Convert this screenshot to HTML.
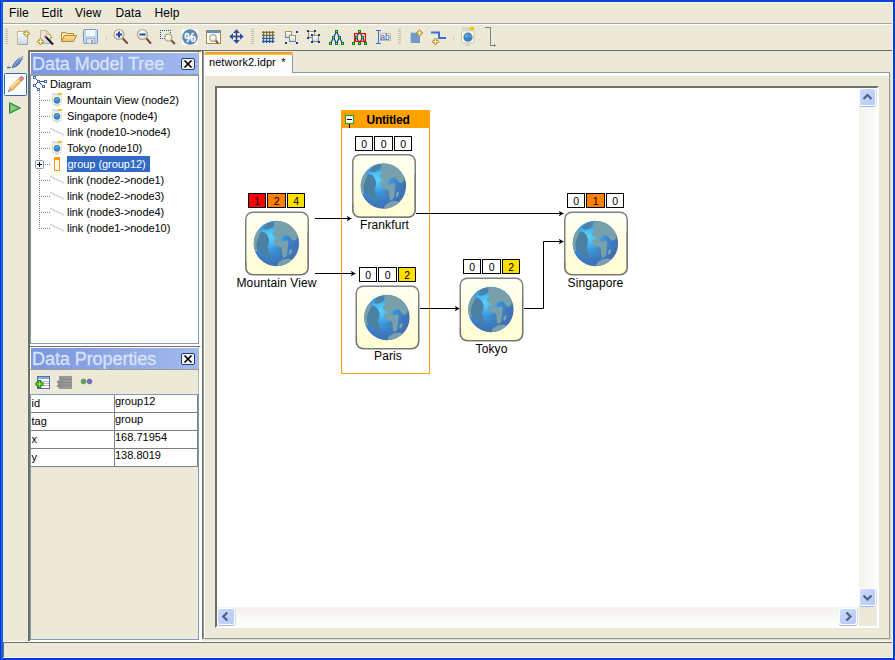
<!DOCTYPE html>
<html><head><meta charset="utf-8"><title>network2.idpr</title>
<style>
html,body{margin:0;padding:0}
body{width:895px;height:660px;overflow:hidden;position:relative;background:#ECE9D8;font-family:"Liberation Sans",sans-serif;font-size:11px;color:#000}
div,span,svg{position:absolute;box-sizing:border-box}
.menu{top:6px;font-size:12px;line-height:14px;white-space:nowrap;letter-spacing:0.1px}
.tt{font-size:11px;line-height:16px;height:16px;white-space:nowrap;letter-spacing:-0.05px}
.sel{background:#316AC5;color:#fff}
.title{height:21px;background:linear-gradient(90deg,#7A96DF,#A3BAEE);color:#D9E2F8;font-size:18px;line-height:21px;letter-spacing:-0.06px;padding-left:1px;padding-top:1px;-webkit-text-stroke:0.3px #D9E2F8;white-space:nowrap;overflow:hidden}
.xbtn{width:14px;height:12px;border:1px solid #1C3F8C;border-radius:2px;background:#F6F5EE}
.pt{font-size:11px;line-height:13px;white-space:nowrap}
.sbtn{background:linear-gradient(135deg,#CDDBFB,#B5C9F5);border:1px solid #fff;border-radius:3px;box-shadow:0 1px 0 #9DB5EC,1px 0 0 #D4DEF8}
</style></head><body>
<!-- window frame -->
<div style="left:0;top:0;width:895px;height:2px;background:#0046DC"></div>
<div style="left:0;top:658px;width:895px;height:2px;background:#003CDC"></div>
<div style="left:0;top:0;width:3px;height:660px;background:linear-gradient(90deg,#0831D9 0,#0831D9 33%,#1668EE 34%,#0A5CE6)"></div>
<div style="left:893px;top:0;width:2px;height:660px;background:#003CDC"></div>
<div style="left:892px;top:2px;width:1px;height:656px;background:#FDF3DA"></div>
<div style="left:3px;top:2px;width:889px;height:1px;background:#FDF3DA"></div>

<!-- menu -->
<span class="menu" style="left:9px">File</span>
<span class="menu" style="left:41.5px">Edit</span>
<span class="menu" style="left:75px">View</span>
<span class="menu" style="left:115.5px">Data</span>
<span class="menu" style="left:154.5px">Help</span>
<div style="left:3px;top:23px;width:889px;height:1px;background:#ACA899"></div>
<div style="left:3px;top:24px;width:889px;height:1px;background:#fff"></div>

<!-- toolbar -->
<svg class="abs" style="left:0;top:0" width="520" height="50" viewBox="0 0 520 50"><defs><linearGradient id="pg" x1="0" y1="0" x2="0" y2="1"><stop offset="0" stop-color="#FFFFFF"/><stop offset="1" stop-color="#C8D8F0"/></linearGradient><linearGradient id="fo" x1="0" y1="0" x2="0" y2="1"><stop offset="0" stop-color="#FFE2A0"/><stop offset="1" stop-color="#F0B860"/></linearGradient><linearGradient id="gr" gradientUnits="userSpaceOnUse" x1="0" y1="31" x2="0" y2="43"><stop offset="0" stop-color="#946E1C"/><stop offset="0.45" stop-color="#5C6C60"/><stop offset="1" stop-color="#0C50C0"/></linearGradient><linearGradient id="sq" x1="0" y1="0" x2="0" y2="1"><stop offset="0" stop-color="#B09850"/><stop offset="1" stop-color="#7080A8"/></linearGradient><radialGradient id="ln" cx="0.35" cy="0.35" r="0.8"><stop offset="0" stop-color="#FFFFFF"/><stop offset="1" stop-color="#D0DCE8"/></radialGradient></defs>
<path d="M5 29.5 H8 M5 31.5 H8 M5 33.5 H8 M5 35.5 H8 M5 37.5 H8 M5 39.5 H8 M5 41.5 H8 M5 43.5 H8" stroke="#C2BFAF" stroke-width="1"/>
<path d="M17.5 31.5 H27.5 V44.5 H17.5 Z" fill="url(#pg)" stroke="#A8A498"/><path d="M17.5 44 V31.5 H27" stroke="#C8B484" fill="none"/>
<path d="M26.5 29.9 L30.1 33.5 L26.5 37.1 L22.9 33.5 Z" fill="#C39A22" stroke="#A88418" stroke-width="0.4"/><path d="M26.5 31.3 V35.7 M24.3 33.5 H28.7" stroke="#FFFBE6" stroke-width="1.1" fill="none"/>
<path d="M40.5 30.5 H46.5 L50.5 34.5 V43.500 H40.5 Z" fill="url(#pg)" stroke="#B0AC9C"/><path d="M40.5 43 V30.5 H46.5 L50.5 34.5 H46.5 V30.5" stroke="#C8B484" fill="#E8E4D4"/>
<path d="M45.5 36.5 L53 44.5" stroke="#101030" stroke-width="2"/><path d="M44.8 35.8 L46.2 37.3" stroke="#D05030" stroke-width="2"/>
<g shape-rendering="crispEdges"><rect x="49" y="35" width="1" height="1" fill="#F4E020"/><rect x="52" y="35" width="1" height="1" fill="#F4E020"/><rect x="50" y="36" width="1" height="1" fill="#F0C020"/><rect x="51" y="37" width="1" height="1" fill="#D06030"/><rect x="52" y="37" width="1" height="1" fill="#F4E020"/><rect x="51" y="38" width="1" height="1" fill="#F4E020"/></g>
<path d="M40.5 37.9 L44.1 41.5 L40.5 45.1 L36.9 41.5 Z" fill="#C39A22" stroke="#A88418" stroke-width="0.4"/><path d="M40.5 39.3 V43.7 M38.3 41.5 H42.7" stroke="#FFFBE6" stroke-width="1.1" fill="none"/>
<path d="M61.500 41.500 V32.5 H65.5 L66.5 33.5 H73.5 V35.5" fill="#FFE9B0" stroke="#C08830"/>
<path d="M61.500 41.500 L64.5 35.5 H76.5 L73.5 41.500 Z" fill="url(#fo)" stroke="#C08830"/>
<rect x="83.5" y="29.5" width="14" height="14" rx="1" fill="#C4D6F0" stroke="#7C98C8"/><rect x="86" y="30" width="9" height="6" fill="#F4F8FF"/><rect x="86.500" y="38.5" width="8" height="5" fill="#DCE6F4" stroke="#8CA4CC" stroke-width="0.800"/><rect x="91" y="40" width="2" height="3" fill="#B8A878"/>
<path d="M106.500 36 V40" stroke="#CFCBB8"/>
<path d="M122.5 38 L127 43" stroke="#84483C" stroke-width="2" stroke-linecap="round"/><circle cx="119" cy="34.5" r="5" fill="url(#ln)" stroke="#B8A878" stroke-width="1.200"/>
<path d="M116 34.500 H122 M119 31.500 V37.5" stroke="#1C4CA8" stroke-width="2"/>
<path d="M146 38 L150.5 43" stroke="#84483C" stroke-width="2" stroke-linecap="round"/><circle cx="142.5" cy="34.5" r="5" fill="url(#ln)" stroke="#B8A878" stroke-width="1.200"/>
<path d="M139.500 34.500 H145.500" stroke="#1C4CA8" stroke-width="2"/>
<g shape-rendering="crispEdges" fill="#1C4CA8"><rect x="160" y="30" width="1" height="1"/><rect x="160" y="38" width="1" height="1"/><rect x="162" y="30" width="1" height="1"/><rect x="162" y="38" width="1" height="1"/><rect x="164" y="30" width="1" height="1"/><rect x="164" y="38" width="1" height="1"/><rect x="166" y="30" width="1" height="1"/><rect x="166" y="38" width="1" height="1"/><rect x="168" y="30" width="1" height="1"/><rect x="168" y="38" width="1" height="1"/><rect x="170" y="30" width="1" height="1"/><rect x="170" y="38" width="1" height="1"/><rect x="160" y="32" width="1" height="1"/><rect x="170" y="32" width="1" height="1"/><rect x="160" y="34" width="1" height="1"/><rect x="170" y="34" width="1" height="1"/><rect x="160" y="36" width="1" height="1"/><rect x="170" y="36" width="1" height="1"/></g>
<path d="M170.85 40.05 L174.4 43.4" stroke="#84483C" stroke-width="2" stroke-linecap="round"/><circle cx="168.4" cy="37.6" r="3.5" fill="url(#ln)" stroke="#B8A878" stroke-width="1.200"/>
<rect x="182" y="29" width="16" height="16" fill="#fff"/><circle cx="190" cy="37" r="7.800" fill="#5C88B4"/><text x="190" y="42" font-size="13" font-weight="bold" fill="#fff" stroke="#fff" stroke-width="0.3" text-anchor="middle" font-family="'Liberation Sans',sans-serif">%</text>
<rect x="206.5" y="30.5" width="14" height="13" fill="#fff" stroke="#A08A48"/><rect x="207" y="31" width="13" height="2" fill="#4C94E4"/>
<path d="M215.31 40.31 L217.5 42.5" stroke="#84483C" stroke-width="2" stroke-linecap="round"/><circle cx="213" cy="38" r="3.3" fill="url(#ln)" stroke="#B8A878" stroke-width="1.200"/>
<path d="M236.500 31 V42 M231 36.500 H242" stroke="#2A4E9C" stroke-width="1.500" fill="none"/><path d="M236.500 29.300 L239.800 33 H233.200 Z M236.500 43.700 L239.800 40 H233.200 Z M229.300 36.500 L233 33.200 V39.800 Z M243.700 36.500 L240 33.200 V39.800 Z" fill="#2A4E9C"/><rect x="235.500" y="35.500" width="2" height="2" fill="#5A3C9C"/>
<path d="M251 29.5 H254 M251 31.5 H254 M251 33.5 H254 M251 35.5 H254 M251 37.5 H254 M251 39.5 H254 M251 41.5 H254 M251 43.5 H254" stroke="#C2BFAF" stroke-width="1"/>
<rect x="263" y="32" width="10" height="10" fill="#fff"/><path d="M263.600 31 V43 M266.600 31 V43 M269.600 31 V43 M272.600 31 V43 M262 32.400 H274.500 M262 35.400 H274.500 M262 38.400 H274.500 M262 41.400 H274.500" stroke="url(#gr)" stroke-width="1.400" fill="none"/>
<rect x="285.5" y="31.500" width="6" height="6" fill="url(#pg)" stroke="url(#sq)"/><rect x="289.5" y="35.5" width="6" height="6" fill="url(#pg)" stroke="url(#sq)"/><rect x="296" y="31" width="2" height="2" fill="#1C3C80"/><rect x="285" y="42" width="2" height="2" fill="#1C3C80"/><rect x="296" y="42" width="2" height="2" fill="#1C3C80"/>
<rect x="308.5" y="31.500" width="6" height="6" fill="url(#pg)" stroke="url(#sq)"/><rect x="312.5" y="35.5" width="6" height="6" fill="url(#pg)" stroke="url(#sq)"/><rect x="307" y="30" width="2" height="2" fill="#1C3C80"/><rect x="314" y="30" width="2" height="2" fill="#1C3C80"/><rect x="307" y="37" width="2" height="2" fill="#1C3C80"/><rect x="311" y="34" width="2" height="2" fill="#1C3C80"/><rect x="318" y="34" width="2" height="2" fill="#1C3C80"/><rect x="311" y="41" width="2" height="2" fill="#1C3C80"/><rect x="318" y="41" width="2" height="2" fill="#1C3C80"/>
<path d="M336.5 31.500 L333.5 37.500 L330.5 43.500 M333.5 37.500 L336.5 43.500 M336.5 31.500 L339.5 37.500 L342.5 43.500 M339.5 37.500 L336.5 43.500" stroke="#1C1CF0" stroke-width="1.1" fill="none"/><g shape-rendering="crispEdges"><rect x="335" y="30" width="3" height="3" fill="#008800"/><rect x="336" y="31" width="1" height="1" fill="#88E888"/><rect x="332" y="36" width="3" height="3" fill="#008800"/><rect x="333" y="37" width="1" height="1" fill="#88E888"/><rect x="338" y="36" width="3" height="3" fill="#008800"/><rect x="339" y="37" width="1" height="1" fill="#88E888"/><rect x="329" y="42" width="3" height="3" fill="#008800"/><rect x="330" y="43" width="1" height="1" fill="#88E888"/><rect x="335" y="42" width="3" height="3" fill="#008800"/><rect x="336" y="43" width="1" height="1" fill="#88E888"/><rect x="341" y="42" width="3" height="3" fill="#008800"/><rect x="342" y="43" width="1" height="1" fill="#88E888"/></g>
<path d="M359.5 31.500 L356.5 37.500 L353.5 43.500 M356.5 37.500 L359.5 43.500 M359.5 31.500 L362.5 37.500 L365.5 43.500 M362.5 37.500 L359.5 43.500" stroke="#1C1CF0" stroke-width="1.1" fill="none"/><g shape-rendering="crispEdges"><rect x="358" y="30" width="3" height="3" fill="#008800"/><rect x="359" y="31" width="1" height="1" fill="#88E888"/><rect x="355" y="36" width="3" height="3" fill="#008800"/><rect x="356" y="37" width="1" height="1" fill="#88E888"/><rect x="361" y="36" width="3" height="3" fill="#008800"/><rect x="362" y="37" width="1" height="1" fill="#88E888"/><rect x="352" y="42" width="3" height="3" fill="#008800"/><rect x="353" y="43" width="1" height="1" fill="#88E888"/><rect x="358" y="42" width="3" height="3" fill="#008800"/><rect x="359" y="43" width="1" height="1" fill="#88E888"/><rect x="364" y="42" width="3" height="3" fill="#008800"/><rect x="365" y="43" width="1" height="1" fill="#88E888"/></g>
<rect x="354.6" y="33.600" width="10.8" height="7.8" fill="none" stroke="#F00808" stroke-width="1.300"/>
<rect x="380.5" y="33.500" width="10" height="7" fill="#F4F6FA" stroke="#C4BC9C"/><text x="385" y="39.6" font-size="8.5" fill="#2858B0" text-anchor="middle" font-family="'Liberation Sans',sans-serif">ab</text><path d="M376 30.500 H381 M376 43.500 H381 M378.500 30.500 V43.500" stroke="#3A6CC8" fill="none"/>
<path d="M398 29.5 H401 M398 31.5 H401 M398 33.5 H401 M398 35.5 H401 M398 37.5 H401 M398 39.5 H401 M398 41.5 H401 M398 43.5 H401" stroke="#C2BFAF" stroke-width="1"/>
<rect x="410" y="32.500" width="10" height="10.500" fill="#7898C4"/><path d="M410.500 43 V32.500 H420" stroke="#A8E0F0" fill="none"/>
<path d="M419.5 29.4 L423.1 33 L419.5 36.6 L415.9 33 Z" fill="#C39A22" stroke="#A88418" stroke-width="0.4"/><path d="M419.5 30.8 V35.2 M417.3 33 H421.7" stroke="#FFFBE6" stroke-width="1.1" fill="none"/>
<path d="M431 32.500 H439 V38 H446" stroke="#3A70DC" stroke-width="2" fill="none"/>
<path d="M435.5 37.9 L439.1 41.5 L435.5 45.1 L431.9 41.5 Z" fill="#C39A22" stroke="#A88418" stroke-width="0.4"/><path d="M435.5 39.3 V43.7 M433.3 41.5 H437.7" stroke="#FFFBE6" stroke-width="1.1" fill="none"/>
<path d="M453.500 36 V40" stroke="#CFCBB8"/>
<rect x="462" y="27" width="8" height="3" fill="#D8D8D0"/><rect x="470" y="27" width="4" height="3" fill="#E8C800"/><rect x="461.500" y="30.800" width="12.500" height="12.200" rx="1.5" fill="#FFFDD8" stroke="#C8C8B4"/><circle cx="468" cy="37.200" r="4.600" fill="#3E80C4"/><circle cx="466.800" cy="36" r="1.800" fill="#58B8EC"/><path d="M469 33.500 q3 1 3 4.500 l-2.500 -1 z" fill="#6C98B0"/><rect x="465" y="44.500" width="5" height="1" fill="#B8B8B8"/>
<path d="M485 27.500 H490.500 V45.500 H495" stroke="#808080" fill="none" shape-rendering="crispEdges"/><path d="M494 44 L496 45.500 L494 47 Z" fill="#707070"/></svg>
<!-- top shadow line across -->
<div style="left:28px;top:50px;width:864px;height:1px;background:#716F64"></div>
<div style="left:28px;top:51px;width:173px;height:1px;background:#716F64"></div>

<!-- left strip -->
<svg class="abs" style="left:0;top:50px" width="30" height="80" viewBox="0 50 30 80"><path d="M12 67.500 C13.500 63.500 16 60.500 19.500 58.200 L22.800 56.500 C22.600 58.800 21 60.200 20.400 61.800 C19 65.300 15.800 67.300 12 67.500 Z" fill="#5C86C8" stroke="#3C64A8" stroke-width="0.700"/><path d="M14.500 65.500 C16 62.500 18 60.500 20.500 59" stroke="#A8C0E8" stroke-width="1" fill="none"/><path d="M19.800 58.500 L22.500 57" stroke="#C8CCD8" stroke-width="1.300"/><path d="M7 67.500 H10.500" stroke="#3C64A8" stroke-width="1.400"/>
<rect x="4.500" y="73.500" width="22" height="22" rx="1" fill="#fff" stroke="#316AC5" stroke-width="1"/>
<path d="M8.300 91.700 L9.800 87.500 L12.500 90.200 Z" fill="#E8C890" stroke="#B89060" stroke-width="0.500"/><path d="M8.300 91.700 L8.900 90 L10 91.100 Z" fill="#303058"/><path d="M9.800 87.500 L18.600 78.700 L21.300 81.400 L12.500 90.200 Z" fill="#F4C260" stroke="#C08A38" stroke-width="0.700"/><path d="M10.800 87.500 L19 79.300" stroke="#FFE8B0" stroke-width="1.100"/><path d="M18.600 78.700 L19.800 77.500 L22.500 80.200 L21.300 81.400 Z" fill="#B4B4BC" stroke="#8C8C98" stroke-width="0.500"/><path d="M19.800 77.500 L20.600 76.700 Q22 75.800 23 76.900 Q24 78 23.300 79.400 L22.500 80.200 Z" fill="#EC8484" stroke="#B85858" stroke-width="0.600"/>
<path d="M9.500 102.500 L20.500 108 L9.500 113.500 Z" fill="#5CB45C" stroke="#38883A" stroke-width="1"/><path d="M11 105 L17 108 L11 111 Z" fill="#8CD08C"/></svg>

<!-- TREE PANEL -->
<div style="left:28px;top:50px;width:2px;height:591px;background:#716F64"></div>
<div style="left:30px;top:52px;width:169px;height:1px;background:#fff"></div>
<div style="left:30px;top:52px;width:1px;height:23px;background:#fff"></div>
<div style="left:198px;top:52px;width:1px;height:23px;background:#B9B6A6"></div><div style="left:199px;top:52px;width:3px;height:294px;background:#fff"></div>
<div class="title" style="left:31px;top:53px;width:167px">Data Model Tree</div>
<div class="xbtn" style="left:181px;top:58px"></div>
<svg style="left:181px;top:58px" width="14" height="12" viewBox="0 0 14 12"><path d="M3.500 2.500 L10.500 9.500 M10.500 2.500 L3.500 9.500" stroke="#000" stroke-width="1.700"/></svg>
<div style="left:30px;top:74px;width:169px;height:1px;background:#A09D8E"></div>
<div style="left:30px;top:75px;width:169px;height:269px;background:#fff;border:1px solid #7F9DB9"></div>
<div style="left:30px;top:344px;width:171px;height:2px;background:#fff"></div>
<svg class="abs" style="left:0;top:0" width="210" height="240" viewBox="0 0 210 240"><g shape-rendering="crispEdges">
<rect x="33" y="76" width="3" height="3" fill="#4868B8"/>
<rect x="34" y="77" width="1" height="1" fill="#FFFFFF"/>
<rect x="37" y="80" width="3" height="3" fill="#4868B8"/>
<rect x="38" y="81" width="1" height="1" fill="#FFFFFF"/>
<rect x="44" y="80" width="3" height="3" fill="#4868B8"/>
<rect x="45" y="81" width="1" height="1" fill="#FFFFFF"/>
<rect x="33" y="84" width="3" height="3" fill="#4868B8"/>
<rect x="34" y="85" width="1" height="1" fill="#FFFFFF"/>
<rect x="42" y="85" width="3" height="3" fill="#4868B8"/>
<rect x="43" y="86" width="1" height="1" fill="#FFFFFF"/>
<rect x="37" y="88" width="3" height="3" fill="#4868B8"/>
<rect x="38" y="89" width="1" height="1" fill="#FFFFFF"/>
<rect x="36" y="79" width="1" height="1" fill="#1C3C78"/>
<rect x="36" y="83" width="1" height="1" fill="#1C3C78"/>
<rect x="36" y="87" width="1" height="1" fill="#1C3C78"/>
<rect x="40" y="83" width="1" height="1" fill="#1C3C78"/>
<rect x="41" y="84" width="1" height="1" fill="#1C3C78"/>
<rect x="40" y="81" width="4" height="1" fill="#3A5CA8"/>
<rect x="39" y="92" width="1" height="1" fill="#808080"/>
<rect x="39" y="94" width="1" height="1" fill="#808080"/>
<rect x="39" y="96" width="1" height="1" fill="#808080"/>
<rect x="39" y="98" width="1" height="1" fill="#808080"/>
<rect x="39" y="100" width="1" height="1" fill="#808080"/>
<rect x="39" y="102" width="1" height="1" fill="#808080"/>
<rect x="39" y="104" width="1" height="1" fill="#808080"/>
<rect x="39" y="106" width="1" height="1" fill="#808080"/>
<rect x="39" y="108" width="1" height="1" fill="#808080"/>
<rect x="39" y="110" width="1" height="1" fill="#808080"/>
<rect x="39" y="112" width="1" height="1" fill="#808080"/>
<rect x="39" y="114" width="1" height="1" fill="#808080"/>
<rect x="39" y="116" width="1" height="1" fill="#808080"/>
<rect x="39" y="118" width="1" height="1" fill="#808080"/>
<rect x="39" y="120" width="1" height="1" fill="#808080"/>
<rect x="39" y="122" width="1" height="1" fill="#808080"/>
<rect x="39" y="124" width="1" height="1" fill="#808080"/>
<rect x="39" y="126" width="1" height="1" fill="#808080"/>
<rect x="39" y="128" width="1" height="1" fill="#808080"/>
<rect x="39" y="130" width="1" height="1" fill="#808080"/>
<rect x="39" y="132" width="1" height="1" fill="#808080"/>
<rect x="39" y="134" width="1" height="1" fill="#808080"/>
<rect x="39" y="136" width="1" height="1" fill="#808080"/>
<rect x="39" y="138" width="1" height="1" fill="#808080"/>
<rect x="39" y="140" width="1" height="1" fill="#808080"/>
<rect x="39" y="142" width="1" height="1" fill="#808080"/>
<rect x="39" y="144" width="1" height="1" fill="#808080"/>
<rect x="39" y="146" width="1" height="1" fill="#808080"/>
<rect x="39" y="148" width="1" height="1" fill="#808080"/>
<rect x="39" y="150" width="1" height="1" fill="#808080"/>
<rect x="39" y="152" width="1" height="1" fill="#808080"/>
<rect x="39" y="154" width="1" height="1" fill="#808080"/>
<rect x="39" y="156" width="1" height="1" fill="#808080"/>
<rect x="39" y="158" width="1" height="1" fill="#808080"/>
<rect x="39" y="170" width="1" height="1" fill="#808080"/>
<rect x="39" y="172" width="1" height="1" fill="#808080"/>
<rect x="39" y="174" width="1" height="1" fill="#808080"/>
<rect x="39" y="176" width="1" height="1" fill="#808080"/>
<rect x="39" y="178" width="1" height="1" fill="#808080"/>
<rect x="39" y="180" width="1" height="1" fill="#808080"/>
<rect x="39" y="182" width="1" height="1" fill="#808080"/>
<rect x="39" y="184" width="1" height="1" fill="#808080"/>
<rect x="39" y="186" width="1" height="1" fill="#808080"/>
<rect x="39" y="188" width="1" height="1" fill="#808080"/>
<rect x="39" y="190" width="1" height="1" fill="#808080"/>
<rect x="39" y="192" width="1" height="1" fill="#808080"/>
<rect x="39" y="194" width="1" height="1" fill="#808080"/>
<rect x="39" y="196" width="1" height="1" fill="#808080"/>
<rect x="39" y="198" width="1" height="1" fill="#808080"/>
<rect x="39" y="200" width="1" height="1" fill="#808080"/>
<rect x="39" y="202" width="1" height="1" fill="#808080"/>
<rect x="39" y="204" width="1" height="1" fill="#808080"/>
<rect x="39" y="206" width="1" height="1" fill="#808080"/>
<rect x="39" y="208" width="1" height="1" fill="#808080"/>
<rect x="39" y="210" width="1" height="1" fill="#808080"/>
<rect x="39" y="212" width="1" height="1" fill="#808080"/>
<rect x="39" y="214" width="1" height="1" fill="#808080"/>
<rect x="39" y="216" width="1" height="1" fill="#808080"/>
<rect x="39" y="218" width="1" height="1" fill="#808080"/>
<rect x="39" y="220" width="1" height="1" fill="#808080"/>
<rect x="39" y="222" width="1" height="1" fill="#808080"/>
<rect x="39" y="224" width="1" height="1" fill="#808080"/>
<rect x="39" y="226" width="1" height="1" fill="#808080"/>
<rect x="39" y="228" width="1" height="1" fill="#808080"/>
<rect x="41" y="100" width="1" height="1" fill="#808080"/>
<rect x="43" y="100" width="1" height="1" fill="#808080"/>
<rect x="45" y="100" width="1" height="1" fill="#808080"/>
<rect x="47" y="100" width="1" height="1" fill="#808080"/>
<rect x="49" y="100" width="1" height="1" fill="#808080"/>
<rect x="41" y="116" width="1" height="1" fill="#808080"/>
<rect x="43" y="116" width="1" height="1" fill="#808080"/>
<rect x="45" y="116" width="1" height="1" fill="#808080"/>
<rect x="47" y="116" width="1" height="1" fill="#808080"/>
<rect x="49" y="116" width="1" height="1" fill="#808080"/>
<rect x="41" y="132" width="1" height="1" fill="#808080"/>
<rect x="43" y="132" width="1" height="1" fill="#808080"/>
<rect x="45" y="132" width="1" height="1" fill="#808080"/>
<rect x="47" y="132" width="1" height="1" fill="#808080"/>
<rect x="49" y="132" width="1" height="1" fill="#808080"/>
<rect x="41" y="148" width="1" height="1" fill="#808080"/>
<rect x="43" y="148" width="1" height="1" fill="#808080"/>
<rect x="45" y="148" width="1" height="1" fill="#808080"/>
<rect x="47" y="148" width="1" height="1" fill="#808080"/>
<rect x="49" y="148" width="1" height="1" fill="#808080"/>
<rect x="45" y="164" width="1" height="1" fill="#808080"/>
<rect x="47" y="164" width="1" height="1" fill="#808080"/>
<rect x="49" y="164" width="1" height="1" fill="#808080"/>
<rect x="41" y="180" width="1" height="1" fill="#808080"/>
<rect x="43" y="180" width="1" height="1" fill="#808080"/>
<rect x="45" y="180" width="1" height="1" fill="#808080"/>
<rect x="47" y="180" width="1" height="1" fill="#808080"/>
<rect x="49" y="180" width="1" height="1" fill="#808080"/>
<rect x="41" y="196" width="1" height="1" fill="#808080"/>
<rect x="43" y="196" width="1" height="1" fill="#808080"/>
<rect x="45" y="196" width="1" height="1" fill="#808080"/>
<rect x="47" y="196" width="1" height="1" fill="#808080"/>
<rect x="49" y="196" width="1" height="1" fill="#808080"/>
<rect x="41" y="212" width="1" height="1" fill="#808080"/>
<rect x="43" y="212" width="1" height="1" fill="#808080"/>
<rect x="45" y="212" width="1" height="1" fill="#808080"/>
<rect x="47" y="212" width="1" height="1" fill="#808080"/>
<rect x="49" y="212" width="1" height="1" fill="#808080"/>
<rect x="41" y="228" width="1" height="1" fill="#808080"/>
<rect x="43" y="228" width="1" height="1" fill="#808080"/>
<rect x="45" y="228" width="1" height="1" fill="#808080"/>
<rect x="47" y="228" width="1" height="1" fill="#808080"/>
<rect x="49" y="228" width="1" height="1" fill="#808080"/>
</g>
<g transform="translate(52,92)"><rect x="0" y="1" width="6" height="2" fill="#DADAD6"/><rect x="6" y="1" width="4" height="2" fill="#E6C800"/><rect x="0.4" y="3.8" width="9.2" height="8.8" rx="1.2" fill="#FFFFE2" stroke="#D2D2C0" stroke-width="0.8"/><circle cx="5" cy="8.4" r="3.3" fill="#3C80C4"/><circle cx="4.4" cy="7.6" r="1.5" fill="#4CA8E0"/><path d="M5.6 5.6 q2 0.5 2.2 3 l-1.8 -0.6z" fill="#6C98B0"/><rect x="3" y="13.4" width="4" height="1" fill="#C4C4C4"/></g>
<g transform="translate(52,108)"><rect x="0" y="1" width="6" height="2" fill="#DADAD6"/><rect x="6" y="1" width="4" height="2" fill="#E6C800"/><rect x="0.4" y="3.8" width="9.2" height="8.8" rx="1.2" fill="#FFFFE2" stroke="#D2D2C0" stroke-width="0.8"/><circle cx="5" cy="8.4" r="3.3" fill="#3C80C4"/><circle cx="4.4" cy="7.6" r="1.5" fill="#4CA8E0"/><path d="M5.6 5.6 q2 0.5 2.2 3 l-1.8 -0.6z" fill="#6C98B0"/><rect x="3" y="13.4" width="4" height="1" fill="#C4C4C4"/></g>
<path d="M50 128.3 L64 135" stroke="#BEBEBE" stroke-width="1" fill="none"/>
<g transform="translate(52,140)"><rect x="0" y="1" width="6" height="2" fill="#DADAD6"/><rect x="6" y="1" width="4" height="2" fill="#E6C800"/><rect x="0.4" y="3.8" width="9.2" height="8.8" rx="1.2" fill="#FFFFE2" stroke="#D2D2C0" stroke-width="0.8"/><circle cx="5" cy="8.4" r="3.3" fill="#3C80C4"/><circle cx="4.4" cy="7.6" r="1.5" fill="#4CA8E0"/><path d="M5.6 5.6 q2 0.5 2.2 3 l-1.8 -0.6z" fill="#6C98B0"/><rect x="3" y="13.4" width="4" height="1" fill="#C4C4C4"/></g>
<g shape-rendering="crispEdges"><rect x="54" y="157" width="6" height="14" fill="#FF9C00"/><rect x="55" y="160" width="4" height="10" fill="#fff"/></g>
<rect x="35.5" y="160.5" width="8" height="8" rx="1" fill="#FBFAF6" stroke="#7898B5"/>
<path d="M37 164.5 H42 M39.5 162 V167" stroke="#000" fill="none" shape-rendering="crispEdges"/>
<path d="M50 176.3 L64 183" stroke="#BEBEBE" stroke-width="1" fill="none"/>
<path d="M50 192.3 L64 199" stroke="#BEBEBE" stroke-width="1" fill="none"/>
<path d="M50 208.3 L64 215" stroke="#BEBEBE" stroke-width="1" fill="none"/>
<path d="M50 224.3 L64 231" stroke="#BEBEBE" stroke-width="1" fill="none"/></svg><span class="tt" style="left:50px;top:76px">Diagram</span>
<span class="tt" style="left:67px;top:92px">Mountain View (node2)</span>
<span class="tt" style="left:67px;top:108px">Singapore (node4)</span>
<span class="tt" style="left:67px;top:124px">link (node10-&gt;node4)</span>
<span class="tt" style="left:67px;top:140px">Tokyo (node10)</span>
<span class="tt sel" style="left:67px;top:156px;padding:0 3px 0 0.5px;width:83px">group (group12)</span>
<span class="tt" style="left:67px;top:172px">link (node2-&gt;node1)</span>
<span class="tt" style="left:67px;top:188px">link (node2-&gt;node3)</span>
<span class="tt" style="left:67px;top:204px">link (node3-&gt;node4)</span>
<span class="tt" style="left:67px;top:220px">link (node1-&gt;node10)</span>

<!-- PROPS PANEL -->
<div style="left:30px;top:346px;width:170px;height:1px;background:#716F64"></div>
<div style="left:30px;top:347px;width:169px;height:1px;background:#fff"></div>
<div style="left:30px;top:347px;width:1px;height:47px;background:#fff"></div>
<div style="left:198px;top:347px;width:1px;height:47px;background:#B9B6A6"></div><div style="left:199px;top:347px;width:3px;height:295px;background:#fff"></div>
<div class="title" style="left:31px;top:348px;width:167px">Data Properties</div>
<div style="left:30px;top:369px;width:169px;height:1px;background:#A09D8E"></div>
<div class="xbtn" style="left:181px;top:353px"></div>
<svg style="left:181px;top:353px" width="14" height="12" viewBox="0 0 14 12"><path d="M3.500 2.500 L10.500 9.500 M10.500 2.500 L3.500 9.500" stroke="#000" stroke-width="1.700"/></svg>
<svg class="abs" style="left:30px;top:370px" width="70" height="24" viewBox="30 370 70 24"><rect x="37.500" y="376.500" width="12" height="12" fill="#fff" stroke="#5070B0"/><rect x="38" y="377" width="11" height="2" fill="#88A8E0"/><path d="M40 381.500 H49 M40 383.500 H49 M40 385.500 H49" stroke="#B0B8C8"/><path d="M39.500 380 V388 M35.500 384 H43.500" stroke="#108010" stroke-width="3.400"/><path d="M39.500 381 V387 M36.500 384 H42.500" stroke="#A0E040" stroke-width="1.400"/>
<rect x="59" y="376" width="13" height="13" fill="#989898"/><path d="M60 379.500 H72 M60 382.500 H72 M60 385.500 H72" stroke="#888"/><path d="M57.500 381 L62.500 387 M62.500 381 L57.500 387" stroke="#8C8C8C" stroke-width="2.600"/>
<circle cx="83.500" cy="381.500" r="2.400" fill="#58A858" stroke="#408840" stroke-width="0.600"/><circle cx="89.500" cy="381.500" r="2.400" fill="#8068C0" stroke="#6050A0" stroke-width="0.600"/></svg>
<div style="left:30px;top:394px;width:169px;height:246px;border:1px solid #7F9DB9"></div>
<div style="left:31px;top:395px;width:167px;height:72px;background:#fff;border-right:1px solid #808080"></div>
<div style="left:31px;top:412px;width:167px;height:1px;background:#808080"></div>
<div style="left:31px;top:430px;width:167px;height:1px;background:#808080"></div>
<div style="left:31px;top:448px;width:167px;height:1px;background:#808080"></div>
<div style="left:31px;top:466px;width:167px;height:1px;background:#808080"></div>
<div style="left:114px;top:395px;width:1px;height:72px;background:#808080"></div>
<span class="pt" style="left:31.5px;top:397px">id</span>
<span class="pt" style="left:31.5px;top:415px">tag</span>
<span class="pt" style="left:31.5px;top:433px">x</span>
<span class="pt" style="left:31.5px;top:451px">y</span>
<span class="pt" style="left:115px;top:395px">group12</span>
<span class="pt" style="left:115px;top:413px">group</span>
<span class="pt" style="left:115px;top:431px">168.71954</span>
<span class="pt" style="left:115px;top:449px">138.8019</span>
<div style="left:30px;top:640px;width:171px;height:2px;background:#fff"></div>

<!-- TAB PANE -->
<div style="left:202px;top:51px;width:1px;height:588px;background:#716F64"></div>
<div style="left:203px;top:51px;width:1px;height:588px;background:#919B9C"></div>
<div style="left:204px;top:72px;width:685px;height:4px;background:#FCFCFE"></div>
<div style="left:204px;top:76px;width:1px;height:562px;background:#FCFCFE"></div>
<div style="left:292px;top:72px;width:597px;height:1px;background:#919B9C"></div>
<div style="left:889px;top:72px;width:1px;height:567px;background:#919B9C"></div>
<div style="left:204px;top:638px;width:686px;height:1px;background:#919B9C"></div>
<div style="left:890px;top:73px;width:1px;height:567px;background:#DEDAC9"></div>
<div style="left:205px;top:639px;width:686px;height:1px;background:#DEDAC9"></div>
<!-- tab -->
<div style="left:204px;top:52px;width:89px;height:24px;background:#FCFCFE;border-right:1px solid #919B9C;border-radius:3px 3px 0 0"></div>
<div style="left:204px;top:52px;width:89px;height:3px;background:linear-gradient(#E68B2C,#FFC73C);border-radius:3px 3px 0 0"></div>
<div style="left:204px;top:73px;width:89px;height:3px;background:#FCFCFE"></div>
<span class="tt" style="left:209px;top:55px;line-height:14px;letter-spacing:0.06px;word-spacing:2.2px">network2.idpr *</span>

<!-- canvas scrollpane -->
<div style="left:215px;top:86px;width:664px;height:542px;background:#fff;border-style:solid;border-width:2px;border-color:#716F64 #fff #fff #716F64"></div>
<div style="left:859px;top:88px;width:18px;height:519px;background:linear-gradient(90deg,#F3F1EC,#FEFEFB)"></div>
<div style="left:217px;top:607px;width:642px;height:19px;background:linear-gradient(#F3F1EC,#FEFEFB)"></div>
<div style="left:859px;top:607px;width:18px;height:19px;background:#ECE9D8"></div>
<div class="sbtn" style="left:859px;top:88px;width:17px;height:18px"></div>
<div class="sbtn" style="left:859px;top:588px;width:17px;height:18px"></div>
<div class="sbtn" style="left:217px;top:608px;width:18px;height:17px"></div>
<div class="sbtn" style="left:839px;top:608px;width:18px;height:17px"></div>
<svg style="left:0;top:0" width="895" height="660" viewBox="0 0 895 660"><g fill="none" stroke="#4D6185" stroke-width="2.200">
<path d="M863.5 99 L867.5 95 L871.5 99"/><path d="M863.5 595.5 L867.5 599.5 L871.5 595.5"/>
<path d="M227.3 612.5 L223.3 616.5 L227.3 620.5"/><path d="M846.5 612.5 L850.5 616.5 L846.5 620.5"/></g></svg>
<svg class="abs" style="left:0;top:0" width="895" height="660" viewBox="0 0 895 660" font-family="'Liberation Sans',sans-serif" fill="#000">
<defs>
<radialGradient id="gg" cx="25" cy="25" r="30" gradientUnits="userSpaceOnUse">
<stop offset="0" stop-color="#5AD2FA"/><stop offset="0.2" stop-color="#4CC0F2"/><stop offset="0.45" stop-color="#3A96DC"/><stop offset="0.75" stop-color="#3C7CC2"/><stop offset="1" stop-color="#4270B2"/>
</radialGradient>
<linearGradient id="nb" x1="0" y1="0" x2="0" y2="1"><stop offset="0" stop-color="#FFFFF2"/><stop offset="1" stop-color="#FFFDD2"/></linearGradient>
<clipPath id="gc"><circle cx="31.4" cy="32" r="22.7"/></clipPath>
<symbol id="node" viewBox="0 0 64 64" overflow="visible">
<rect x="0.75" y="0.75" width="62.5" height="62.5" rx="7" ry="7" fill="url(#nb)" stroke="#808080" stroke-width="1.5"/>
<path d="M1 50 V56 a7 7 0 0 0 7 7 H56 a7 7 0 0 0 7 -7 V20" fill="none" stroke="#6E6E6E" stroke-width="1.2" opacity="0.6"/>
<circle cx="31.4" cy="32" r="22.7" fill="url(#gg)"/>
<g clip-path="url(#gc)">
<path d="M28.2 10.2 L33.0 9.5 L38.8 10.2 L43.7 12.6 L48.1 16.0 L51.0 20.4 L52.4 24.3 L51.5 27.7 L49.5 29.1 L47.6 29.1 L45.6 26.7 L44.2 24.8 L41.7 23.8 L38.8 24.3 L37.4 25.7 L36.4 27.7 L33.5 27.2 L30.1 25.4 L27.7 23.3 L27.5 20.9 L29.1 19.9 L30.9 18.0 L29.1 15.5 L28.2 12.6Z" fill="#78A0AA"/>
<path d="M29.1 27.7 L32.0 27.4 L35.9 29.1 L38.8 30.1 L42.2 28.6 L43.2 31.1 L42.7 36.9 L42.2 42.7 L41.3 45.1 L38.8 46.4 L37.4 44.7 L36.9 38.8 L36.1 35.7 L33.5 35.1 L30.9 34.0 L28.9 31.8 L28.3 29.6Z" fill="#78A0AA"/>
<path d="M15.5 19.9 L19.9 20.9 L22.1 23.3 L24.1 27.7 L23.8 32.0 L22.5 35.4 L23.3 39.8 L24.8 43.7 L25.4 47.1 L23.3 46.4 L19.4 43.7 L15.5 39.8 L12.1 38.8 L10.7 35.0 L10.9 31.1 L12.4 26.7 L14.1 22.8Z" fill="#4A80A2"/>
<path d="M5.8 29.1 L8.7 24.3 L12.1 19.4 L16.0 19.2 L14.8 22.8 L12.8 27.2 L11.4 32.0 L11.7 36.9 L12.4 39.0 L9.7 41.3 L5.8 35.0Z" fill="#7AA0AC"/>
<path d="M18.0 17.0 L19.9 13.6 L23.3 11.2 L28.2 9.7 L29.3 12.6 L27.9 15.5 L24.8 17.5 L20.9 18.3Z" fill="#4A82A8"/>
<path d="M32.0 53.2 L34.5 50.0 L37.9 48.1 L42.7 47.1 L47.1 47.8 L45.6 50.0 L42.7 52.4 L38.8 54.9 L34.5 55.8Z" fill="#78A0AA"/>
<path d="M44.2 39.3 L45.6 37.7 L47.1 38.3 L46.6 41.3 L44.9 43.5 L43.7 42.2Z" fill="#7AA5B0"/>
<path d="M32.0 36.9 L36.1 36.1 L36.9 38.3 L36.4 40.8 L33.5 41.3 L31.8 39.3Z" fill="#4A84B2"/>
</g>
</symbol>
<marker id="ah" markerWidth="6" markerHeight="6" refX="4.8" refY="3" orient="auto" markerUnits="userSpaceOnUse"><path d="M0 0.2 L4.8 3 L0 5.8 L1.4 3 Z" fill="#000"/></marker>
</defs>
<rect x="341.5" y="110.5" width="88" height="263" fill="#fff" stroke="#FFA200"/>
<rect x="341" y="110" width="89" height="18" fill="#FFA200"/>
<rect x="345.5" y="115.5" width="8" height="8" fill="#fff" stroke="#2E9E3C" stroke-width="1.2"/>
<path d="M347 119.5 H352" stroke="#000" stroke-width="1"/>
<path d="M349.5 124 V128" stroke="#000" stroke-width="1"/>
<text x="388" y="124" font-size="12" font-weight="bold" text-anchor="middle" letter-spacing="-0.2">Untitled</text>
<g fill="none" stroke="#000" stroke-width="1" marker-end="url(#ah)">
<path d="M315 218.5 H351.5"/>
<path d="M315 273.5 H355.5"/>
<path d="M416 213.5 H563.5"/>
<path d="M420 308.5 H459.5"/>
<path d="M524 308.5 H543.5 V241.5 H563.5"/>
</g>
<rect x="248.5" y="193.5" width="17" height="14" fill="#FF0000" stroke="#000" stroke-width="1" shape-rendering="crispEdges"/>
<text x="257.2" y="204.9" font-size="10.5" text-anchor="middle">1</text>
<rect x="267.5" y="193.5" width="18" height="14" fill="#FF8000" stroke="#000" stroke-width="1" shape-rendering="crispEdges"/>
<text x="276.7" y="204.9" font-size="10.5" text-anchor="middle">2</text>
<rect x="287.5" y="193.5" width="17" height="14" fill="#FFE000" stroke="#000" stroke-width="1" shape-rendering="crispEdges"/>
<text x="296.2" y="204.9" font-size="10.5" text-anchor="middle">4</text>
<use href="#node" x="245" y="211.5" width="64" height="64"/>
<text x="276.5" y="286.5" font-size="12" text-anchor="middle" letter-spacing="0.12">Mountain View</text>
<rect x="355.5" y="136.5" width="17" height="14" fill="#FFFFFF" stroke="#000" stroke-width="1" shape-rendering="crispEdges"/>
<text x="364.2" y="147.9" font-size="10.5" text-anchor="middle">0</text>
<rect x="374.5" y="136.5" width="18" height="14" fill="#FFFFFF" stroke="#000" stroke-width="1" shape-rendering="crispEdges"/>
<text x="383.7" y="147.9" font-size="10.5" text-anchor="middle">0</text>
<rect x="394.5" y="136.5" width="17" height="14" fill="#FFFFFF" stroke="#000" stroke-width="1" shape-rendering="crispEdges"/>
<text x="403.2" y="147.9" font-size="10.5" text-anchor="middle">0</text>
<use href="#node" x="352" y="154" width="64" height="64"/>
<text x="384.5" y="228.5" font-size="12" text-anchor="middle" letter-spacing="0.12">Frankfurt</text>
<rect x="359.5" y="267.5" width="17" height="14" fill="#FFFFFF" stroke="#000" stroke-width="1" shape-rendering="crispEdges"/>
<text x="368.2" y="278.9" font-size="10.5" text-anchor="middle">0</text>
<rect x="378.5" y="267.5" width="18" height="14" fill="#FFFFFF" stroke="#000" stroke-width="1" shape-rendering="crispEdges"/>
<text x="387.7" y="278.9" font-size="10.5" text-anchor="middle">0</text>
<rect x="398.5" y="267.5" width="17" height="14" fill="#FFE000" stroke="#000" stroke-width="1" shape-rendering="crispEdges"/>
<text x="407.2" y="278.9" font-size="10.5" text-anchor="middle">2</text>
<use href="#node" x="355.5" y="285.5" width="64" height="64"/>
<text x="388" y="359.5" font-size="12" text-anchor="middle" letter-spacing="0.12">Paris</text>
<rect x="463.5" y="259.5" width="17" height="14" fill="#FFFFFF" stroke="#000" stroke-width="1" shape-rendering="crispEdges"/>
<text x="472.2" y="270.9" font-size="10.5" text-anchor="middle">0</text>
<rect x="482.5" y="259.5" width="18" height="14" fill="#FFFFFF" stroke="#000" stroke-width="1" shape-rendering="crispEdges"/>
<text x="491.7" y="270.9" font-size="10.5" text-anchor="middle">0</text>
<rect x="502.5" y="259.5" width="17" height="14" fill="#FFE000" stroke="#000" stroke-width="1" shape-rendering="crispEdges"/>
<text x="511.2" y="270.9" font-size="10.5" text-anchor="middle">2</text>
<use href="#node" x="459.5" y="277.5" width="64" height="64"/>
<text x="491.5" y="353" font-size="12" text-anchor="middle" letter-spacing="0.12">Tokyo</text>
<rect x="567.5" y="193.5" width="17" height="14" fill="#FFFFFF" stroke="#000" stroke-width="1" shape-rendering="crispEdges"/>
<text x="576.2" y="204.9" font-size="10.5" text-anchor="middle">0</text>
<rect x="586.5" y="193.5" width="18" height="14" fill="#FF8000" stroke="#000" stroke-width="1" shape-rendering="crispEdges"/>
<text x="595.7" y="204.9" font-size="10.5" text-anchor="middle">1</text>
<rect x="606.5" y="193.5" width="17" height="14" fill="#FFFFFF" stroke="#000" stroke-width="1" shape-rendering="crispEdges"/>
<text x="615.2" y="204.9" font-size="10.5" text-anchor="middle">0</text>
<use href="#node" x="564" y="211.5" width="64" height="64"/>
<text x="595.5" y="286.5" font-size="12" text-anchor="middle" letter-spacing="0.12">Singapore</text></svg>

<!-- STATUS -->
<div style="left:3px;top:641px;width:889px;height:1px;background:#fff"></div>
<div style="left:3px;top:642px;width:889px;height:1px;background:#716F64"></div>
<div style="left:3px;top:642px;width:1px;height:15px;background:#716F64"></div>
<div style="left:4px;top:657px;width:889px;height:1px;background:#fff"></div>
</body></html>
